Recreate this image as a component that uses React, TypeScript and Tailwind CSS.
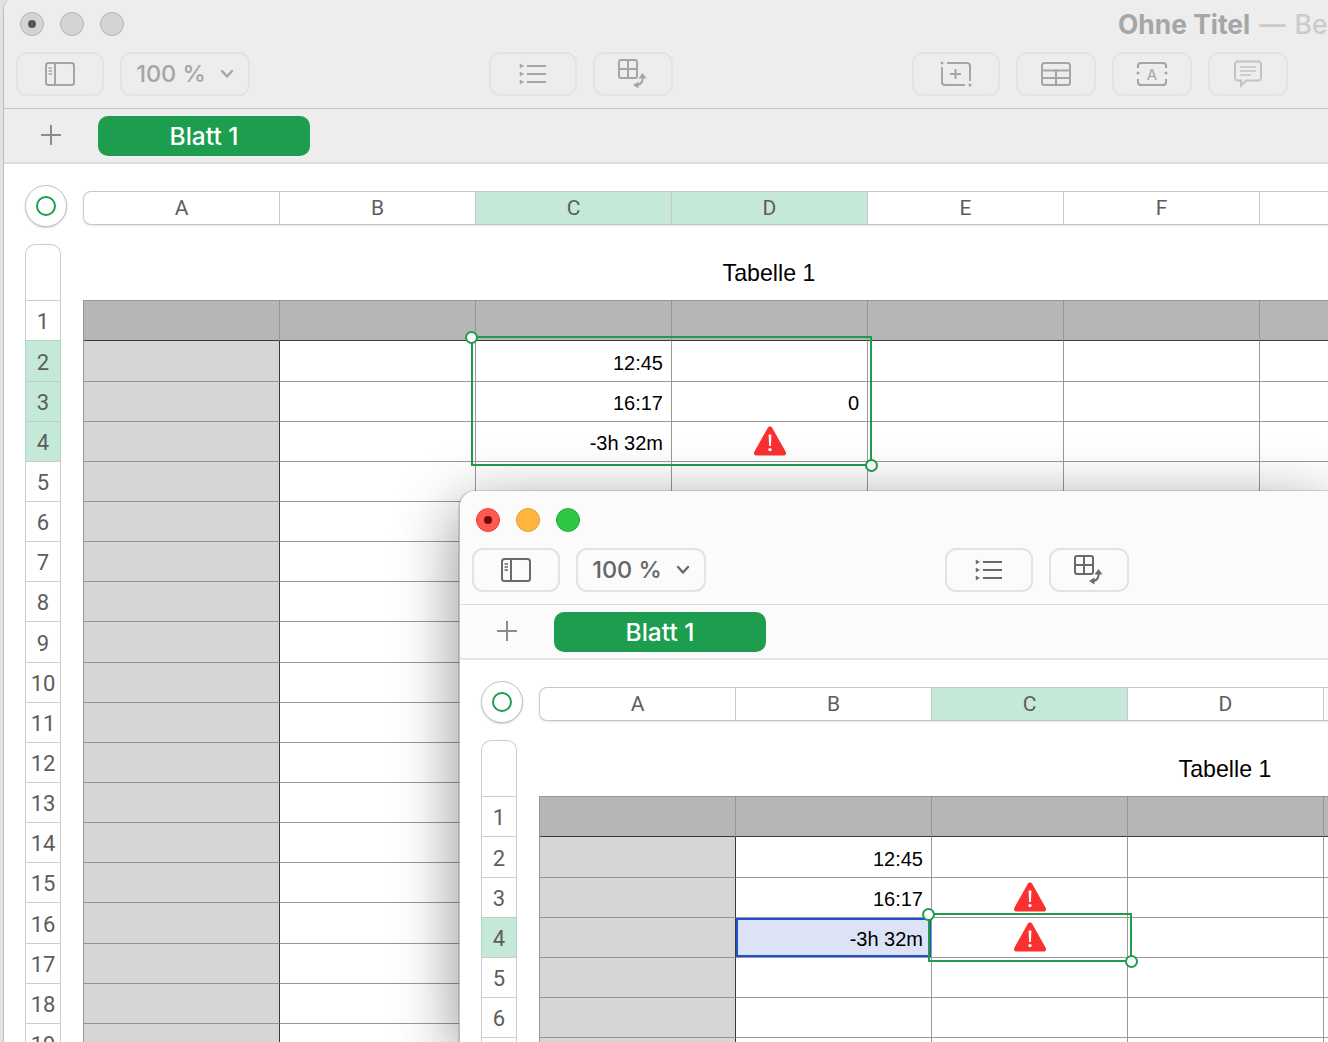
const COLUMNS = ['A', 'B', 'C', 'D', 'E', 'F', 'G'];
const ROWS = Array.from({ length: 19 }, (_, i) => i + 1);

type Cells = Record<number, Record<number, string>>;

function WarningIcon() {
  return (
    <svg width="32" height="30" viewBox="0 0 32 30">
      <path d="M16 3 L29.5 27 L2.5 27 Z" fill="#fb3030" stroke="#fb3030" strokeWidth="5" strokeLinejoin="round" />
      <path d="M14.6 8.5 h2.8 l-0.5 11.5 h-1.8 Z" fill="#fff" strokeLinejoin="round" />
      <circle cx="16" cy="23.6" r="1.7" fill="#fff" />
    </svg>
  );
}

function SidebarIcon() {
  return (
    <svg width="32" height="26" viewBox="0 0 32 26" fill="none" stroke="currentColor" strokeWidth="2">
      <rect x="2" y="2" width="28" height="22" rx="2.5" />
      <path d="M11 2 v22" />
      <path d="M4.5 7 h3.5 M4.5 10 h3.5 M4.5 13 h3.5" strokeWidth="1.3" />
    </svg>
  );
}

function ListIcon() {
  return (
    <svg width="28" height="22" viewBox="0 0 28 22" fill="none" stroke="currentColor">
      <path d="M8 3 h19 M8 11 h19 M8 19 h19" strokeWidth="2" />
      <path d="M1 1 l3.5 2 l-3.5 2 Z M1 9 l3.5 2 l-3.5 2 Z M1 17 l3.5 2 l-3.5 2 Z" fill="currentColor" strokeWidth="0.5" />
    </svg>
  );
}

function TableSwapIcon() {
  return (
    <svg width="30" height="30" viewBox="0 0 30 30" fill="none" stroke="currentColor" strokeWidth="2">
      <rect x="1" y="1" width="18" height="18" rx="2" />
      <path d="M10 1 v18 M1 10 h18" />
      <path d="M24.5 18 c0.5 4 -1 7 -5 8" />
      <path d="M20.5 19.5 L24.5 14 L28.5 19.5 Z M20.5 22.500 L15 26 L20.5 29.500 Z" fill="currentColor" stroke="none" />
    </svg>
  );
}

function AddShapeIcon() {
  return (
    <svg width="32" height="26" viewBox="0 0 32 26" fill="none" stroke="currentColor" strokeWidth="2">
      <path d="M2 6 v15 q0 3 3 3 h20 M7 2 h20 q3 0 3 3 v15" />
      <path d="M10 13 h11 M15.500 8 v10" />
      <circle cx="2" cy="2" r="1.4" fill="currentColor" stroke="none" />
      <circle cx="30" cy="24" r="1.6" fill="currentColor" stroke="none" />
    </svg>
  );
}

function GridIcon() {
  return (
    <svg width="32" height="26" viewBox="0 0 32 26" fill="none" stroke="currentColor" strokeWidth="2">
      <rect x="2" y="2" width="28" height="22" rx="2.5" />
      <path d="M2 9.500 h28 M2 17 h28 M16 9.500 v14.500" />
    </svg>
  );
}

function TextBoxIcon() {
  return (
    <svg width="32" height="26" viewBox="0 0 32 26" fill="none" stroke="currentColor" strokeWidth="2">
      <path d="M2 7 v-2 q0 -3 3 -3 h22 q3 0 3 3 v2 M2 18 v3 q0 3 3 3 h22 q3 0 3 -3 v-3" />
      <circle cx="2" cy="12" r="1.5" fill="currentColor" stroke="none" />
      <circle cx="30" cy="12" r="1.5" fill="currentColor" stroke="none" />
      <text x="16" y="19" textAnchor="middle" fontSize="15" fontFamily="Inter, sans-serif" fill="currentColor" stroke="none">A</text>
    </svg>
  );
}

function CommentIcon() {
  return (
    <svg width="30" height="28" viewBox="0 0 30 28" fill="none" stroke="currentColor" strokeWidth="2">
      <path d="M5 1.500 h20 q3 0 3 3 v13 q0 3 -3 3 h-12 l-5 5 v-5 h-3 q-3 0 -3 -3 v-13 q0 -3 3 -3 Z" />
      <path d="M7 7 h16 M7 11 h16 M7 15 h11" strokeWidth="1.300" />
    </svg>
  );
}

function ChevronIcon() {
  return (
    <svg width="14" height="10" viewBox="0 0 14 10" fill="none" stroke="currentColor" strokeWidth="2.400" strokeLinecap="round" strokeLinejoin="round">
      <path d="M2 2 l5 5.500 l5 -5.500" />
    </svg>
  );
}

function ToolButton({ className, children }: { className: string; children: React.ReactNode }) {
  return (
    <div className={`flex h-11 shrink-0 items-center justify-center rounded-[11px] border-2 border-[#e3e3e3] ${className}`}>
      {children}
    </div>
  );
}

function TableCell({ value, row, col, blue }: { value?: string; row: number; col: number; blue: boolean }) {
  let cls = 'border-r border-b border-[#999999]';
  if (row === 0) {
    cls = 'border-r border-b border-r-[#969696] border-b-[#3a3a3a] bg-[#b5b6b5]';
  } else if (col === 0) {
    cls = 'border-r border-b border-r-[#3a3a3a] border-b-[#939393] bg-[#d6d6d6]';
  }
  if (blue) cls += ' bg-[#dde3f6] shadow-[inset_0_0_0_2px_#1f4fd0]';

  return (
    <div className={`flex h-full w-[196px] shrink-0 items-center justify-end pr-2 text-[20px] text-black ${cls}`}>
      {value === 'warn' ? (
        <span className="flex w-full justify-center pl-2"><WarningIcon /></span>
      ) : (
        <span className="pt-[3px]">{value}</span>
      )}
    </div>
  );
}

function Window({
  active,
  cells,
  selCols,
  selRows,
  blueCell,
  selection,
  className,
}: {
  active: boolean;
  cells: Cells;
  selCols: number[];
  selRows: number[];
  blueCell?: [number, number];
  selection: string;
  className: string;
}) {
  const iconColor = active ? 'text-[#6a6a6a]' : 'text-[#a5a5a5]';
  return (
    <div className={`overflow-hidden rounded-tl-2xl border-l border-[#bdbdbd] bg-white font-['Inter',sans-serif] ${className}`}>
      {/* title bar and toolbar */}
      <div className={`h-[114px] border-b pt-[17px] ${active ? 'border-[#dcdcdc] bg-[#fbfbfb]' : 'border-[#c6c6c6] bg-[#ededed]'}`}>
        <div className="flex h-6 items-center gap-4 pl-4">
          {active ? (
            <>
              <div className="flex h-6 w-6 shrink-0 items-center justify-center rounded-full border border-[#e5443c] bg-[#ff5a52]">
                <div className="h-2 w-2 rounded-full bg-[#6e0a06]" />
              </div>
              <div className="h-6 w-6 shrink-0 rounded-full border border-[#e5a02c] bg-[#ffb53d]" />
              <div className="h-6 w-6 shrink-0 rounded-full border border-[#2aa83c] bg-[#2fc644]" />
            </>
          ) : (
            <>
              <div className="flex h-6 w-6 shrink-0 items-center justify-center rounded-full border border-[#b5b5b5] bg-[#d3d3d3]">
                <div className="h-2 w-2 rounded-full bg-[#555555]" />
              </div>
              <div className="h-6 w-6 shrink-0 rounded-full border border-[#b5b5b5] bg-[#d3d3d3]" />
              <div className="h-6 w-6 shrink-0 rounded-full border border-[#b5b5b5] bg-[#d3d3d3]" />
              <div className="ml-[978px] flex shrink-0 items-center gap-[9px] whitespace-nowrap text-[26.4px] font-bold leading-none text-[#a6a6a6]">
                <span>Ohne Titel</span>
                <span className="font-semibold text-[#cbcbcb]">—</span>
                <span className="font-medium text-[#cbcbcb]">Bearbeitet</span>
              </div>
            </>
          )}
        </div>
        <div className={`mt-4 flex pl-3 ${iconColor}`}>
          <ToolButton className="w-[88px]"><SidebarIcon /></ToolButton>
          <ToolButton className="ml-4 w-[130px] gap-[14px]">
            <span className={`text-[23.5px] font-medium ${active ? 'text-[#666666]' : 'text-[#a6a6a6]'}`}>100 %</span>
            <ChevronIcon />
          </ToolButton>
          <ToolButton className="ml-[239px] w-[88px]"><ListIcon /></ToolButton>
          <ToolButton className="ml-4 w-[80px]"><TableSwapIcon /></ToolButton>
          {!active && (
            <>
              <ToolButton className="ml-[239px] w-[88px]"><AddShapeIcon /></ToolButton>
              <ToolButton className="ml-4 w-[80px]"><GridIcon /></ToolButton>
              <ToolButton className="ml-4 w-[80px]"><TextBoxIcon /></ToolButton>
              <ToolButton className="ml-4 w-[80px] text-[#c4c4c4]"><CommentIcon /></ToolButton>
            </>
          )}
        </div>
      </div>

      {/* sheet tabs */}
      <div className={`flex h-[55px] items-start border-b-2 pt-[7px] ${active ? 'border-[#e4e4e4] bg-[#fbfbfb]' : 'border-[#dcdcdc] bg-[#ededed]'}`}>
        <div className="ml-9 mt-[8px] h-[22px] w-[22px] text-[#8c8c8c]">
          <svg width="22" height="22" viewBox="0 0 22 22" stroke="currentColor" strokeWidth="2"><path d="M1 11 h20 M11 1 v20" /></svg>
        </div>
        <div className="ml-9 flex h-10 w-[212px] items-center justify-center rounded-[10px] bg-[#1c9e4e] pt-px text-[24.5px] font-medium text-white">
          Blatt 1
        </div>
      </div>

      {/* sheet */}
      <div className="pl-[21px] pt-[21px]">
        <div className="flex items-start">
          <div className="flex h-[42px] w-[42px] shrink-0 items-center justify-center rounded-full border border-[#c4c4c4] bg-white shadow-[0_1px_2px_rgba(0,0,0,0.2)]">
            <div className="h-5 w-5 rounded-full border-2 border-[#1c9e4e]" />
          </div>
          <div className="ml-4 mt-[6px] flex h-[34px] w-[1373px] shrink-0 overflow-hidden rounded-l-lg border-y border-l border-[#c8c8c8] bg-white font-['Roboto',sans-serif] shadow-[0_1px_2px_rgba(0,0,0,0.1)]">
            {COLUMNS.map((c, i) => (
              <div
                key={c}
                className={`flex w-[196px] shrink-0 items-center justify-center border-r border-[#c8c8c8] pt-[2px] text-[21px] text-[#5d5d5d] ${selCols.includes(i) ? 'bg-[#c5e9d8] border-[#aacbbb]' : ''}`}
              >
                {c}
              </div>
            ))}
          </div>
        </div>

        <div className="mt-[17px] flex items-start font-['Liberation_Sans',sans-serif]">
          <div className="w-9 shrink-0 font-['Roboto',sans-serif]">
            <div className="h-14 rounded-t-[10px] border-x border-t border-[#cdcdcd]" />
            {ROWS.map((n, i) => (
              <div
                key={n}
                className={`flex items-center justify-center border-x border-t pt-[2px] text-[22px] text-[#5d5d5d] ${i === 0 ? 'h-[40.47px]' : 'h-[40.15px]'} ${selRows.includes(i) ? 'border-[#b3d4c4] bg-[#c5e9d8]' : 'border-[#cdcdcd] bg-white'}`}
              >
                {n}
              </div>
            ))}
          </div>
          <div className="ml-[22px] w-[1372px] shrink-0">
            <div className="flex h-14 items-center justify-center pt-[2px] text-[23.2px] text-black">Tabelle 1</div>
            <div className="relative border-l border-t border-[#969696]">
              {ROWS.map((_, r) => (
                <div key={r} className={`flex ${r === 0 ? 'h-[40.47px]' : 'h-[40.15px]'}`}>
                  {COLUMNS.map((_, c) => (
                    <TableCell
                      key={c}
                      row={r}
                      col={c}
                      value={cells[r]?.[c]}
                      blue={!!blueCell && blueCell[0] === r && blueCell[1] === c}
                    />
                  ))}
                </div>
              ))}
              <div className={`absolute border-2 border-[#1c9e4e] ${selection}`}>
                <div className="absolute -left-2 -top-[7px] h-[13px] w-[13px] rounded-full border-2 border-[#1c9e4e] bg-white" />
                <div className="absolute -bottom-2 -right-2 h-[13px] w-[13px] rounded-full border-2 border-[#1c9e4e] bg-white" />
              </div>
            </div>
          </div>
        </div>
      </div>
    </div>
  );
}

export default function App() {
  return (
    <div className="relative h-[1042px] w-[1328px] overflow-hidden bg-[#e2e2e2] pl-[3px]">
      <Window
        active={false}
        className="-mt-[5px] h-[1047px] w-[1400px]"
        selCols={[2, 3]}
        selRows={[1, 2, 3]}
        selection="left-[387px] top-[35px] h-[130px] w-[401px]"
        cells={{
          1: { 2: '12:45' },
          2: { 2: '16:17', 3: '0' },
          3: { 2: '-3h 32m', 3: 'warn' },
        }}
      />
      <Window
        active
        className="absolute left-[459px] top-[491px] h-[551px] w-[869px] shadow-[0_0_0_1px_rgba(0,0,0,0.12),0_16px_64px_rgba(0,0,0,0.45)]"
        selCols={[2]}
        selRows={[3]}
        blueCell={[3, 1]}
        selection="left-[388px] top-[116px] h-[49px] w-[204px]"
        cells={{
          1: { 1: '12:45' },
          2: { 1: '16:17', 2: 'warn' },
          3: { 1: '-3h 32m', 2: 'warn' },
        }}
      />
    </div>
  );
}
